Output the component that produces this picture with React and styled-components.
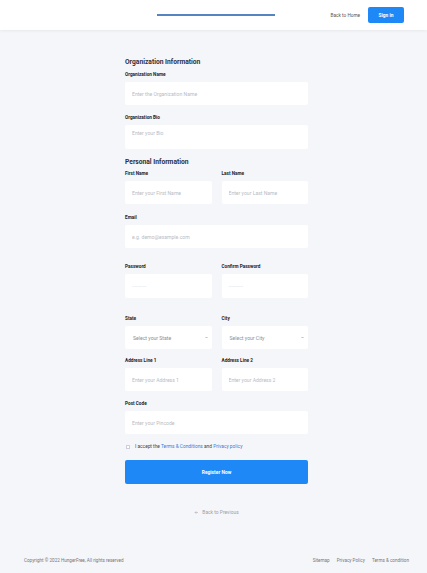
import React from "react";
import styled, { createGlobalStyle } from "styled-components";

const Global = createGlobalStyle`
  * { box-sizing: border-box; }
  html, body { margin: 0; padding: 0; }
  body {
    background: #f5f6fa;
    font-family: Roboto, "Liberation Sans", Arial, sans-serif;
    color: #222;
  }
`;

const Page = styled.div`
  min-height: 573px;
  display: flex;
  flex-direction: column;
`;

const Header = styled.header`
  height: 30px;
  background: #fff;
  box-shadow: 0 1px 3px rgba(0, 0, 0, 0.06);
  display: flex;
  align-items: center;
  padding: 0 23px 0 157px;
  position: relative;
  z-index: 1;
`;

const ProgressLine = styled.div`
  width: 118px;
  height: 1.5px;
  background: #5584bf;
`;

const HeaderNav = styled.nav`
  margin-left: auto;
  display: flex;
  align-items: center;
  gap: 8px;
`;

const NavLink = styled.a`
  font-size: 4.7px;
  color: #555;
  text-decoration: none;
`;

const SignIn = styled.button`
  width: 36px;
  height: 16px;
  border: none;
  border-radius: 2px;
  background: #1e88f7;
  color: #fff;
  font-family: inherit;
  font-size: 4.8px;
  font-weight: 700;
  padding: 0;
`;

const Main = styled.main`
  width: 189px;
  margin: 0 auto;
  padding: 28px 0 0 6px;
  flex: 1;
`;

const SectionTitle = styled.h2`
  margin: ${(p) => p.$top || 0}px 0 ${(p) => p.$bottom ?? 5}px;
  font-size: 6.7px;
  line-height: 9px;
  font-weight: 700;
  color: #2e2e3a;
`;

const Row = styled.div`
  display: grid;
  grid-template-columns: 1fr 1fr;
  column-gap: 10px;
  margin-top: ${(p) => p.$top ?? 10}px;
`;

const Field = styled.div`
  display: flex;
  flex-direction: column;
  margin-top: ${(p) => p.$top ?? 0}px;
`;

const Label = styled.label`
  font-size: 4.7px;
  line-height: 6px;
  font-weight: 700;
  color: #222;
  margin-bottom: 4px;
`;

const Input = styled.input`
  height: ${(p) => p.$h || 23}px;
  width: 100%;
  border: none;
  border-radius: 2px;
  background: #fff;
  padding: 0 7px;
  font-family: inherit;
  font-size: 5.1px;
  color: #222;
  outline: none;
  &::placeholder { color: #b7bcc5; }
`;

const TextArea = styled.textarea`
  height: 24px;
  width: 100%;
  border: none;
  border-radius: 2px;
  background: #fff;
  padding: 4.5px 7px;
  font-family: inherit;
  font-size: 5.1px;
  line-height: 6px;
  resize: none;
  outline: none;
  &::placeholder { color: #b7bcc5; }
`;

const SelectBox = styled.div`
  height: 23px;
  background: #fff;
  border-radius: 2px;
  display: flex;
  align-items: center;
  padding: 0 3px 0 8px;
  font-size: 5.1px;
  color: #8a8f98;
  justify-content: space-between;
`;

const Terms = styled.div`
  display: flex;
  align-items: center;
  gap: 5px;
  margin: 10px 0 0 1px;
  font-size: 4.8px;
  line-height: 6px;
  color: #444;
`;

const Check = styled.span`
  width: 4px;
  height: 4px;
  border: 0.5px solid #ccd;
  border-radius: 0.5px;
  background: #fff;
`;

const Link = styled.a`
  color: #4179d8;
  text-decoration: none;
`;

const Register = styled.button`
  display: block;
  width: 100%;
  height: 24px;
  margin-top: 10px;
  border: none;
  border-radius: 2px;
  background: #1e88f7;
  color: #fff;
  font-family: inherit;
  font-size: 4.9px;
  font-weight: 700;
`;

const Back = styled.a`
  display: flex;
  align-items: center;
  justify-content: center;
  gap: 3px;
  margin-top: 25px;
  font-size: 4.9px;
  color: #9a9ea6;
  text-decoration: none;
`;

const Footer = styled.footer`
  display: flex;
  justify-content: space-between;
  align-items: center;
  padding: 0 18px 0 24px;
  font-size: 4.6px;
  color: #777;
  height: 26px;
`;

const FooterLinks = styled.div`
  display: flex;
  gap: 7px;
`;

const Chevron = () => (
  <svg width="5" height="5" viewBox="0 0 10 10">
    <path d="M3 4l2 2 2-2" fill="none" stroke="#777" strokeWidth="1" />
  </svg>
);

const ArrowLeft = () => (
  <svg width="5" height="5" viewBox="0 0 10 10">
    <path d="M8 5H2M4.5 2.5L2 5l2.5 2.5" fill="none" stroke="#9a9ea6" strokeWidth="1" />
  </svg>
);

export default function App() {
  return (
    <Page>
      <Global />
      <Header>
        <ProgressLine />
        <HeaderNav>
          <NavLink href="#">Back to Home</NavLink>
          <SignIn>Sign in</SignIn>
        </HeaderNav>
      </Header>
      <Main>
        <SectionTitle>Organization Information</SectionTitle>
        <Field>
          <Label>Organization Name</Label>
          <Input placeholder="Enter the Organization Name" />
        </Field>
        <Field $top={10}>
          <Label>Organization Bio</Label>
          <TextArea placeholder="Enter your Bio" />
        </Field>
        <SectionTitle $top={9} $bottom={4}>Personal Information</SectionTitle>
        <Row $top={0}>
          <Field>
            <Label>First Name</Label>
            <Input placeholder="Enter your First Name" />
          </Field>
          <Field>
            <Label>Last Name</Label>
            <Input placeholder="Enter your Last Name" />
          </Field>
        </Row>
        <Field $top={11}>
          <Label>Email</Label>
          <Input placeholder="e.g. demo@example.com" />
        </Field>
        <Row $top={16}>
          <Field>
            <Label>Password</Label>
            <Input $h={24} placeholder="···········" />
          </Field>
          <Field>
            <Label>Confirm Password</Label>
            <Input $h={24} placeholder="···········" />
          </Field>
        </Row>
        <Row $top={18}>
          <Field>
            <Label>State</Label>
            <SelectBox>
              <span>Select your State</span>
              <Chevron />
            </SelectBox>
          </Field>
          <Field>
            <Label>City</Label>
            <SelectBox>
              <span>Select your City</span>
              <Chevron />
            </SelectBox>
          </Field>
        </Row>
        <Row $top={9}>
          <Field>
            <Label>Address Line 1</Label>
            <Input placeholder="Enter your Address 1" />
          </Field>
          <Field>
            <Label>Address Line 2</Label>
            <Input placeholder="Enter your Address 2" />
          </Field>
        </Row>
        <Field $top={10}>
          <Label>Post Code</Label>
          <Input placeholder="Enter your Pincode" />
        </Field>
        <Terms>
          <Check />
          <span>
            I accept the <Link href="#">Terms &amp; Conditions</Link> and{" "}
            <Link href="#">Privacy policy</Link>
          </span>
        </Terms>
        <Register>Register Now</Register>
        <Back href="#">
          <ArrowLeft />
          Back to Previous
        </Back>
      </Main>
      <Footer>
        <span>Copyright © 2022 HungerFree, All rights reserved</span>
        <FooterLinks>
          <span>Sitemap</span>
          <span>Privacy Policy</span>
          <span>Terms &amp; condition</span>
        </FooterLinks>
      </Footer>
    </Page>
  );
}
